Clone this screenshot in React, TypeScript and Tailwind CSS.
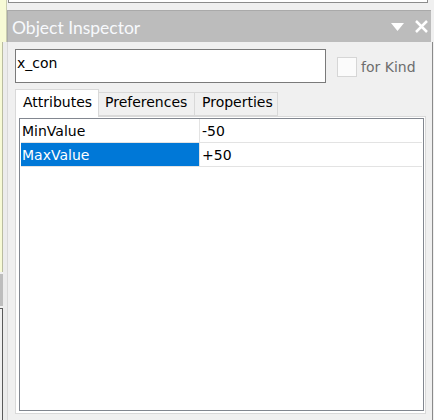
import React from "react";

const ui = "font-['DejaVu_Sans',sans-serif] text-[14px] leading-[16px]";

export default function App() {
  return (
    <div className="flex h-[420px] w-[434px] overflow-hidden bg-[#f0f0f0]">
      {/* Left edge of neighbouring window */}
      <div className="flex w-[7px] shrink-0 flex-col">
        <div className="h-[42px] border-r border-[#c9ccb0] bg-[#f7fad6]" />
        <div className="flex flex-1">
          <div className="flex w-[3px] flex-col">
            <div className="h-[230px] border-r border-[#b9bca0] bg-[#f7fad6]" />
            <div className="h-[2px]" />
            <div className="h-[32px] bg-[#bdbdbd]" />
            <div className="h-[2px]" />
            <div className="flex-1 border-r border-t border-[#5a5a5a] bg-[#f0f0f0]" />
          </div>
          <div className="flex-1 bg-[#ececec]" />
        </div>
      </div>

      {/* Inspector window */}
      <div className="flex flex-1 flex-col">
        {/* Panel above */}
        <div className="h-[10px]">
          <div className="ml-px mr-[6px] h-[3px] border-x border-b border-[#8c8c8c] bg-white" />
        </div>

        {/* Title bar */}
        <div className="mr-[3px] flex h-[32px] items-center border-l border-t border-[#a9a9a9] bg-[#bcbcbc] pl-[4px] pr-[3px]">
          <span className="font-['Lato',sans-serif] text-[17.5px] leading-[22px] text-[#f7f9fc] pt-[2px]">
            Object Inspector
          </span>
          <div className="ml-auto flex items-center gap-[10px]">
            <svg width="14" height="10" viewBox="0 0 14 10">
              <polygon points="0,1 13,1 6.5,9" fill="#ffffff" />
            </svg>
            <svg width="13" height="13" viewBox="0 0 13 13">
              <path d="M1 1 L12 12 M12 1 L1 12" stroke="#ffffff" strokeWidth="2.5" />
            </svg>
          </div>
        </div>

        {/* Body */}
        <div className={`mr-px flex flex-1 flex-col border-l border-r border-l-[#d8d8d8] border-r-[#8a8a8a] pl-[7px] pt-[7px] ${ui}`}>
          {/* Name field + for Kind */}
          <div className="flex items-start">
            <div className="h-[34px] w-[311px] border border-[#7a7a7a] bg-white pl-px pt-[5px] text-[#000]">
              x_con
            </div>
            <div className="ml-[11px] mt-[8px] h-[20px] w-[20px] border border-[#d6d6d6] bg-[#fbfbfb]" />
            <span className="ml-[4px] mt-[10px] text-[#6d6d6d]">for Kind</span>
          </div>

          {/* Tabs */}
          <div className="relative z-10 mt-[6px] flex h-[28px] items-end">
            <div className="h-[28px] w-[84px] border-x border-t border-[#d9d9d9] bg-white pl-[7px] pt-[4px] text-black">
              Attributes
            </div>
            <div className="-ml-px mb-px h-[24px] w-[97px] border border-[#d9d9d9] bg-[#f0f0f0] pl-[6px] pt-px text-black">
              Preferences
            </div>
            <div className="-ml-px mb-px h-[24px] w-[84px] border border-[#d9d9d9] bg-[#f0f0f0] pl-[7px] pt-px text-black">
              Properties
            </div>
          </div>

          {/* Tab panel */}
          <div className="-mt-px h-[298px] w-[411px] border border-[#d9d9d9] bg-white pb-[2px] pl-[3px] pr-px pt-px">
            <div className="flex h-[293px] w-[405px] flex-col border border-[#828790] bg-white px-px">
              <div className="flex h-[24px] border-b border-[#e3e3e3]">
                <div className="flex w-[179px] items-center border-r border-[#e3e3e3] pl-px text-black">
                  MinValue
                </div>
                <div className="flex flex-1 items-center pl-[2px] text-black">-50</div>
              </div>
              <div className="flex h-[24px] border-b border-[#e3e3e3]">
                <div className="flex w-[179px] items-center border-r border-[#e3e3e3] bg-[#0078d7] pl-px text-white">
                  MaxValue
                </div>
                <div className="flex flex-1 items-center pl-[2px] text-black">+50</div>
              </div>
            </div>
          </div>
        </div>
      </div>
    </div>
  );
}
